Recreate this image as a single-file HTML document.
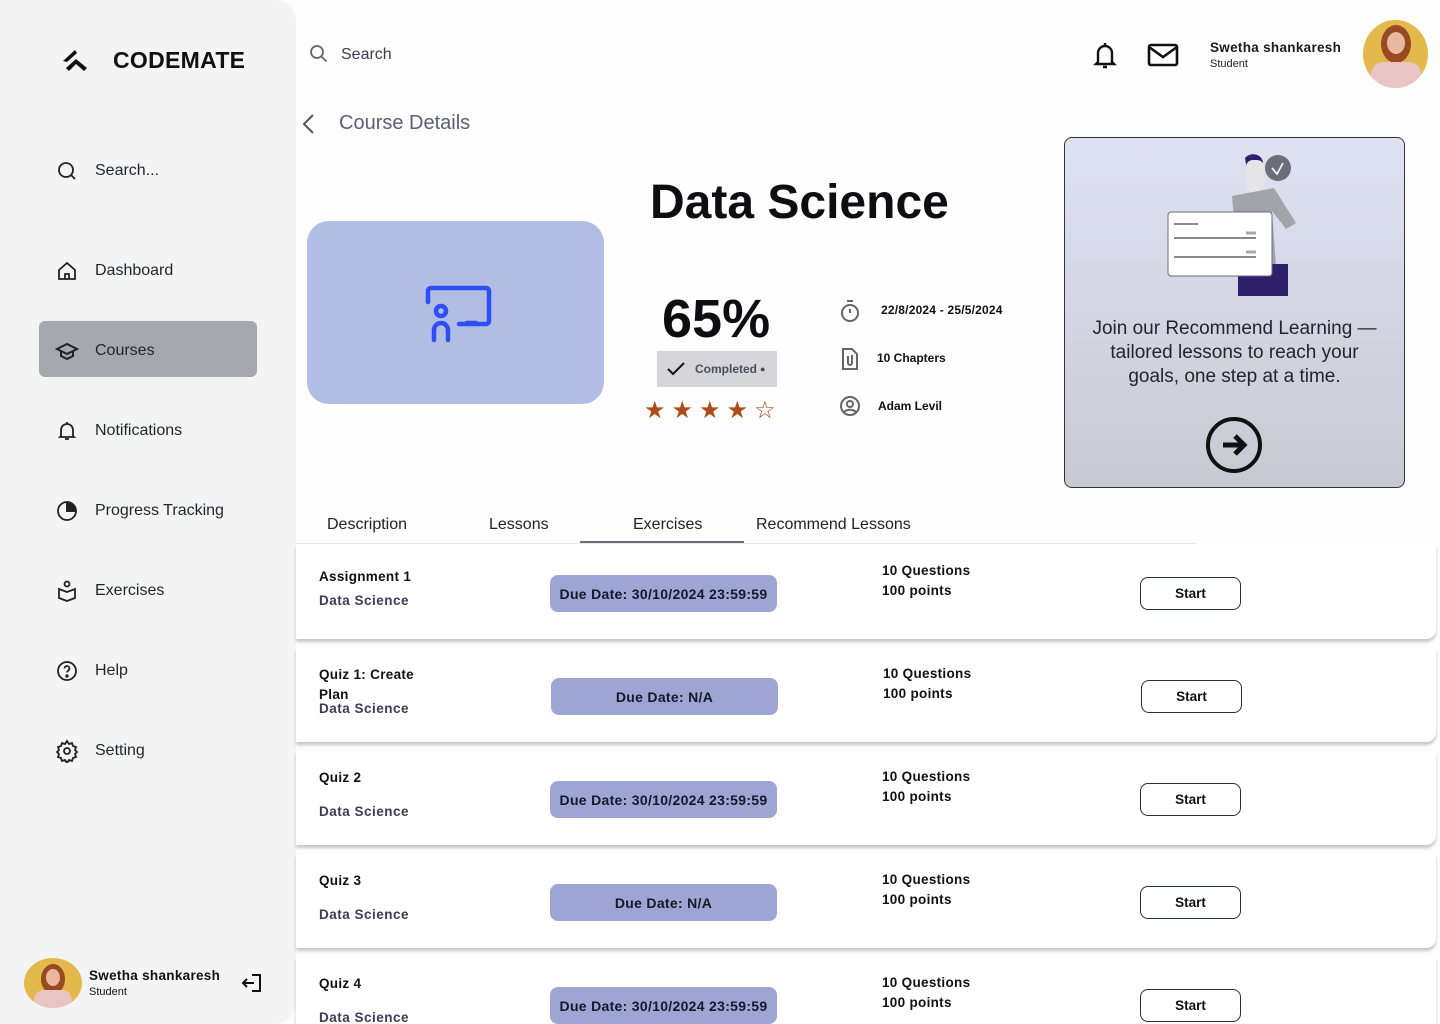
<!DOCTYPE html>
<html style="width:1440px;height:1024px;overflow:hidden"><head><meta charset="utf-8"><style>
*{margin:0;padding:0;box-sizing:border-box}
body{width:1440px;height:1024px;overflow:hidden;background:#fdfdfd;font-family:"Liberation Sans","DejaVu Sans",sans-serif;color:#111;position:relative}
.a{position:absolute}
.side{left:0;top:0;width:296px;height:1024px;background:#f4f4f5;border-radius:0 22px 22px 0}
.nav{left:55px;display:flex;align-items:center;font-size:16px;color:#1f2430}
.nav svg{width:24px;height:24px;margin-right:16px}
.card{left:296px;width:1140px;height:94px;background:#fff;border-radius:0 0 10px 0;box-shadow:0 3px 3px rgba(0,0,0,.22)}
.t{font-size:13.5px;font-weight:bold;color:#111;letter-spacing:.3px}
.s{font-size:13.5px;font-weight:bold;color:#3a3d55;letter-spacing:.5px}
.pill{height:37px;width:227px;background:#9fa5d3;border-radius:8px;font-size:14px;font-weight:bold;display:flex;align-items:center;justify-content:center;color:#15172a;letter-spacing:.3px}
.btn{width:101px;height:33px;border:1px solid #2a2d3a;border-radius:8px;font-size:13.5px;font-weight:bold;display:flex;align-items:center;justify-content:center;background:#fff}
.q{font-size:13.5px;font-weight:bold;line-height:20px;letter-spacing:.3px}
</style></head><body>
<div class="a side"></div>
<svg class="a" style="left:61px;top:48px" width="30" height="26" viewBox="0 0 30 26"><path d="M2 13 L14 2 L16 5 L6 14Z M5 20 L15 11 L26 20 L23 23 L15 16 L8 23Z" fill="#111"/></svg>
<div class="a" style="left:113px;top:47px;font-size:23px;font-weight:bold;letter-spacing:.3px;color:#111">CODEMATE</div>

<div class="a nav" style="top:159px"><svg viewBox="0 0 24 24" fill="none" stroke="#222" stroke-width="1.8"><circle cx="11" cy="11" r="7"/><path d="M16 16l4 4"/></svg>Search...</div>
<div class="a nav" style="top:259px"><svg viewBox="0 0 24 24" fill="none" stroke="#222" stroke-width="1.8"><path d="M4 11l8-7 8 7v9H4z"/><path d="M10 20v-5h4v5"/></svg>Dashboard</div>
<div class="a" style="left:39px;top:321px;width:218px;height:56px;background:#a6a8b0;border-radius:6px"></div>
<div class="a nav" style="top:339px"><svg viewBox="0 0 24 24" fill="none" stroke="#222" stroke-width="2"><path d="M2 10l10-5 10 5-10 5z"/><path d="M6 12v5l6 3 6-3v-5"/></svg>Courses</div>
<div class="a nav" style="top:419px"><svg viewBox="0 0 24 24" fill="none" stroke="#222" stroke-width="1.8"><path d="M6 17V11a6 6 0 0112 0v6l1 1H5z"/><path d="M12 3v2M10 20h4"/></svg>Notifications</div>
<div class="a nav" style="top:499px"><svg viewBox="0 0 24 24" fill="none" stroke="#222" stroke-width="1.8"><circle cx="12" cy="12" r="9"/><path d="M12 3v9h9"/><path d="M12 4v8h8a8 8 0 00-8-8z" fill="#222"/></svg>Progress Tracking</div>
<div class="a nav" style="top:579px"><svg viewBox="0 0 24 24" fill="none" stroke="#222" stroke-width="1.8"><circle cx="12" cy="5" r="2.5"/><path d="M4 10l8 3 8-3v9l-8 3-8-3z"/></svg>Exercises</div>
<div class="a nav" style="top:659px"><svg viewBox="0 0 24 24" fill="none" stroke="#222" stroke-width="1.8"><circle cx="12" cy="12" r="9"/><path d="M9.5 9.5a2.5 2.5 0 115 0c0 2-2.5 2-2.5 4"/><circle cx="12" cy="17" r=".8" fill="#222"/></svg>Help</div>
<div class="a nav" style="top:739px"><svg viewBox="0 0 24 24" fill="none" stroke="#222" stroke-width="1.8"><circle cx="12" cy="12" r="3"/><path d="M12 2l2 3 3-1 1 3 3 1-1 3 2 2-2 2 1 3-3 1-1 3-3-1-2 3-2-3-3 1-1-3-3-1 1-3-2-2 2-2-1-3 3-1 1-3 3 1z"/></svg>Setting</div>

<div class="a" style="left:24px;top:958px;width:58px;height:50px;border-radius:50%;background:#e2b94a;overflow:hidden"><div class="a" style="left:17px;top:6px;width:24px;height:30px;border-radius:50%;background:#9a4a22"></div><div class="a" style="left:22px;top:11px;width:14px;height:17px;border-radius:50%;background:#e8b9a0"></div><div class="a" style="left:10px;top:32px;width:38px;height:24px;border-radius:10px 10px 0 0;background:#e8c4c4"></div></div>
<div class="a" style="left:89px;top:968px;font-size:13.5px;font-weight:bold;letter-spacing:.3px">Swetha shankaresh</div>
<div class="a" style="left:89px;top:986px;font-size:11px">Student</div>
<svg class="a" style="left:240px;top:971px" width="24" height="24" viewBox="0 0 24 24" fill="none" stroke="#111" stroke-width="2"><path d="M12 4h8v16h-8M14 12H3M7 8l-4 4 4 4"/></svg>

<svg class="a" style="left:309px;top:44px" width="20" height="20" viewBox="0 0 20 20" fill="none" stroke="#666" stroke-width="1.8"><circle cx="8" cy="8" r="6"/><path d="M12.5 12.5l5 5"/></svg>
<div class="a" style="left:341px;top:46px;font-size:16px;color:#3a3d4a">Search</div>
<svg class="a" style="left:1092px;top:40px" width="26" height="30" viewBox="0 0 26 30" fill="none" stroke="#111" stroke-width="2.4"><path d="M6 22V13a7 7 0 0114 0v9l2 2H4z"/><path d="M13 3v3M11 27h4"/></svg>
<svg class="a" style="left:1147px;top:43px" width="32" height="24" viewBox="0 0 32 24" fill="none" stroke="#111" stroke-width="2.6"><rect x="2" y="2" width="28" height="20" rx="2"/><path d="M2 4l14 10 14-10"/></svg>
<div class="a" style="left:1210px;top:40px;font-size:13.5px;font-weight:bold;color:#1a1a22;letter-spacing:.3px">Swetha shankaresh</div>
<div class="a" style="left:1210px;top:58px;font-size:11px;color:#222">Student</div>
<div class="a" style="left:1363px;top:20px;width:65px;height:68px;border-radius:50%;background:#e2b94a;overflow:hidden"><div class="a" style="left:18px;top:5px;width:30px;height:38px;border-radius:50%;background:#9a4a22"></div><div class="a" style="left:24px;top:12px;width:18px;height:22px;border-radius:50%;background:#e8b9a0"></div><div class="a" style="left:8px;top:42px;width:50px;height:30px;border-radius:12px 12px 0 0;background:#e8c4c4"></div></div>

<svg class="a" style="left:300px;top:113px" width="18" height="22" viewBox="0 0 18 22" fill="none" stroke="#555" stroke-width="2"><path d="M13 2L4 11l9 9"/></svg>
<div class="a" style="left:339px;top:112px;font-size:20px;color:#5c6070">Course Details</div>

<div class="a" style="left:307px;top:221px;width:297px;height:183px;background:#b2bde4;border-radius:22px"></div>
<svg class="a" style="left:424px;top:284px" width="68" height="62" viewBox="0 0 68 62" fill="none" stroke="#2d4ff5" stroke-width="4.5" stroke-linecap="round"><path d="M4 18V7a3 3 0 013-3h55a3 3 0 013 3v30a3 3 0 01-3 3H35"/><path d="M43 39h9"/><circle cx="17" cy="27" r="5"/><path d="M10 56V46a7 7 0 0114 0v10"/></svg>

<div class="a" style="left:650px;top:175px;font-size:48px;font-weight:bold;color:#0d0d12">Data Science</div>
<div class="a" style="left:662px;top:288px;font-size:54px;font-weight:bold;color:#0d0d12">65%</div>
<div class="a" style="left:657px;top:351px;width:120px;height:36px;background:#d6d6da;display:flex;align-items:center;font-size:12px;font-weight:bold;color:#4a4d5a"><svg style="margin:0 10px 0 10px" width="18" height="14" viewBox="0 0 18 14" fill="none" stroke="#111" stroke-width="2"><path d="M1 7l5 5L17 1"/></svg>Completed <span style="font-size:9px;margin-left:3px">●</span></div>
<div class="a" style="left:644px;top:396px;font-size:24px;color:#b04c18;letter-spacing:6px">★★★★☆</div>

<svg class="a" style="left:839px;top:299px" width="22" height="24" viewBox="0 0 22 24" fill="none" stroke="#666" stroke-width="2"><circle cx="11" cy="14" r="8"/><path d="M8 2h6M11 10v4"/></svg>
<div class="a" style="left:881px;top:303px;font-size:12px;font-weight:bold;color:#111;letter-spacing:.2px">22/8/2024 - 25/5/2024</div>
<svg class="a" style="left:841px;top:347px" width="18" height="24" viewBox="0 0 18 24" fill="none" stroke="#666" stroke-width="2"><path d="M2 2h9l5 5v15H2z"/><path d="M7 9v7a2 2 0 004 0V8"/></svg>
<div class="a" style="left:877px;top:351px;font-size:12px;font-weight:bold">10 Chapters</div>
<svg class="a" style="left:839px;top:395px" width="22" height="22" viewBox="0 0 22 22" fill="none" stroke="#666" stroke-width="2"><circle cx="11" cy="11" r="9"/><circle cx="11" cy="9" r="3"/><path d="M5 17c3-3 9-3 12 0"/></svg>
<div class="a" style="left:878px;top:399px;font-size:12px;font-weight:bold">Adam Levil</div>

<div class="a" style="left:1064px;top:137px;width:341px;height:351px;border:1px solid #333;border-radius:8px;background:linear-gradient(#dfe2f3,#c8c9d2)"></div>
<svg class="a" style="left:1160px;top:148px" width="150" height="150" viewBox="0 0 150 150"><path d="M85 10c5-6 16-5 18 4l-3 14h-12z" fill="#2e1f6a"/><rect x="86" y="12" width="18" height="32" rx="7" fill="#e5e5e8"/><path d="M72 48l42-8 22 35-10 6-14-18 4 55H78z" fill="#a3a4aa"/><path d="M78 116h50v32H78z" fill="#2e1f6a"/><circle cx="118" cy="20" r="13" fill="#6c6e78"/><path d="M112 20l5 6 6-11" stroke="#fff" stroke-width="1.6" fill="none"/><rect x="8" y="64" width="104" height="64" rx="3" fill="#fff" stroke="#6a6b85"/><path d="M14 76h24M14 90h82M14 109h82" stroke="#888" stroke-width="2"/><path d="M86 85h10M86 104h10" stroke="#aaa" stroke-width="3"/></svg>
<div class="a" style="left:1064px;top:317px;width:341px;text-align:center;font-size:19px;line-height:24px;color:#22242e">Join our Recommend Learning —<br>tailored lessons to reach your<br>goals, one step at a time.</div>
<svg class="a" style="left:1205px;top:416px" width="58" height="58" viewBox="0 0 58 58" fill="none" stroke="#111" stroke-width="4"><circle cx="29" cy="29" r="26"/><path d="M18 29h20M30 20l9 9-9 9" stroke-width="5"/></svg>

<div class="a" style="left:327px;top:516px;font-size:16px;color:#222">Description</div>
<div class="a" style="left:489px;top:516px;font-size:16px;color:#222">Lessons</div>
<div class="a" style="left:633px;top:516px;font-size:16px;color:#222">Exercises</div>
<div class="a" style="left:756px;top:516px;font-size:16px;color:#222">Recommend Lessons</div>
<div class="a" style="left:296px;top:543px;width:900px;height:1px;background:#e6e6e8"></div>
<div class="a" style="left:580px;top:541px;width:164px;height:2px;background:#6a6d7a"></div>

<div class="a card" style="top:545px"></div>
<div class="a t" style="left:319px;top:569px">Assignment 1</div><div class="a s" style="left:319px;top:593px">Data Science</div>
<div class="a pill" style="left:550px;top:575px">Due Date: 30/10/2024 23:59:59</div>
<div class="a q" style="left:882px;top:561px">10 Questions<br>100 points</div>
<div class="a btn" style="left:1140px;top:577px">Start</div>

<div class="a card" style="top:648px"></div>
<div class="a t" style="left:319px;top:665px;line-height:20px">Quiz 1: Create<br>Plan</div><div class="a s" style="left:319px;top:701px">Data Science</div>
<div class="a pill" style="left:551px;top:678px">Due Date: N/A</div>
<div class="a q" style="left:883px;top:664px">10 Questions<br>100 points</div>
<div class="a btn" style="left:1141px;top:680px">Start</div>

<div class="a card" style="top:751px"></div>
<div class="a t" style="left:319px;top:770px">Quiz 2</div><div class="a s" style="left:319px;top:804px">Data Science</div>
<div class="a pill" style="left:550px;top:781px">Due Date: 30/10/2024 23:59:59</div>
<div class="a q" style="left:882px;top:767px">10 Questions<br>100 points</div>
<div class="a btn" style="left:1140px;top:783px">Start</div>

<div class="a card" style="top:854px"></div>
<div class="a t" style="left:319px;top:873px">Quiz 3</div><div class="a s" style="left:319px;top:907px">Data Science</div>
<div class="a pill" style="left:550px;top:884px">Due Date: N/A</div>
<div class="a q" style="left:882px;top:870px">10 Questions<br>100 points</div>
<div class="a btn" style="left:1140px;top:886px">Start</div>

<div class="a card" style="top:957px;height:67px;border-radius:0"></div>
<div class="a t" style="left:319px;top:976px">Quiz 4</div><div class="a s" style="left:319px;top:1010px">Data Science</div>
<div class="a pill" style="left:550px;top:987px">Due Date: 30/10/2024 23:59:59</div>
<div class="a q" style="left:882px;top:973px">10 Questions<br>100 points</div>
<div class="a btn" style="left:1140px;top:989px">Start</div>
</body></html>
